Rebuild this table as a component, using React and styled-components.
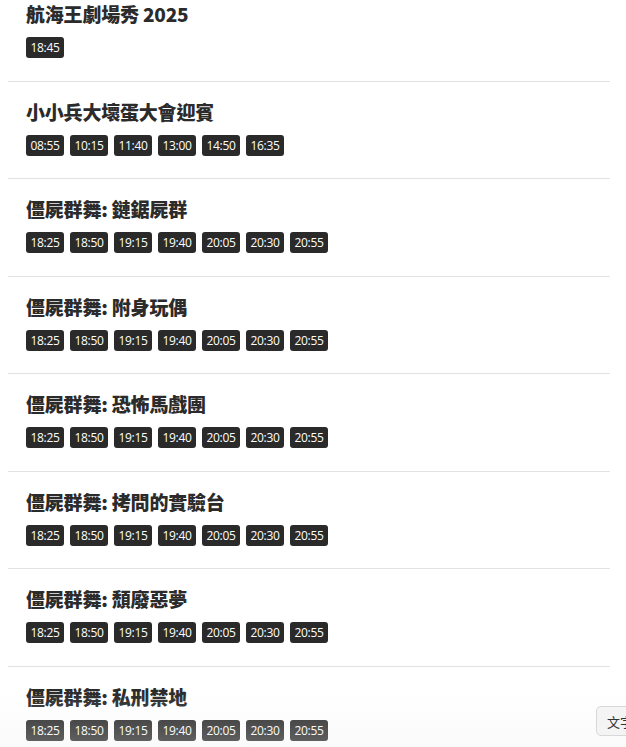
import React from 'react'
import styled, { createGlobalStyle } from 'styled-components'

const GlobalStyle = createGlobalStyle`
  html, body {
    margin: 0;
    padding: 0;
    background: #ffffff;
    overflow: hidden;
  }
  body {
    font-family: 'Noto Sans', 'Noto Sans CJK TC', sans-serif;
    color: #2b2b2b;
  }
`

const zombie = ['18:25', '18:50', '19:15', '19:40', '20:05', '20:30', '20:55']

const shows = [
  { title: '航海王劇場秀 2025', times: ['18:45'] },
  {
    title: '小小兵大壞蛋大會迎賓',
    times: ['08:55', '10:15', '11:40', '13:00', '14:50', '16:35'],
  },
  { title: '僵屍群舞: 鏈鋸屍群', times: zombie },
  { title: '僵屍群舞: 附身玩偶', times: zombie },
  { title: '僵屍群舞: 恐怖馬戲團', times: zombie },
  { title: '僵屍群舞: 拷問的實驗台', times: zombie },
  { title: '僵屍群舞: 頹廢惡夢', times: zombie },
  { title: '僵屍群舞: 私刑禁地', times: zombie },
]

function App() {
  return (
    <Page>
      <GlobalStyle />
      <List>
        {shows.map((show, index) => (
          <Item key={index}>
            <Title>{show.title}</Title>
            <Times>
              {show.times.map((t, i) => (
                <Chip key={i}>{t}</Chip>
              ))}
            </Times>
          </Item>
        ))}
      </List>
      <BottomFade />
      <LangButton>文字</LangButton>
    </Page>
  )
}

const Page = styled.div`
  width: 626px;
  height: 747px;
  overflow: hidden;
  position: relative;
`

const List = styled.div`
  margin: 0 16px 0 8px;
`

const Item = styled.div`
  padding: 18px 18px 22.5px;
  border-bottom: 1px solid #e2e2e2;

  &:first-child {
    padding-top: 2px;
  }
`

const Title = styled.div`
  font-family: 'Noto Sans CJK TC', 'Noto Sans', sans-serif;
  font-weight: 900;
  font-size: 19px;
  line-height: 24px;
  color: #2b2b2b;
  letter-spacing: -0.2px;
`

const Times = styled.div`
  display: flex;
  gap: 6px;
  margin-top: 11px;
`

const Chip = styled.span`
  display: inline-flex;
  align-items: center;
  justify-content: center;
  width: 38px;
  height: 21px;
  box-sizing: border-box;
  background: #2a2a2a;
  color: #ffffff;
  border-radius: 3px;
  font-family: 'Open Sans', 'Noto Sans', sans-serif;
  font-size: 12px;
  letter-spacing: -0.3px;
`

const BottomFade = styled.div`
  position: absolute;
  left: 0;
  right: 0;
  bottom: 0;
  height: 55px;
  pointer-events: none;
  background: linear-gradient(
    to bottom,
    rgba(238, 238, 238, 0) 0%,
    rgba(238, 238, 238, 0.3) 100%
  );
`

const LangButton = styled.div`
  position: absolute;
  left: 596px;
  top: 706px;
  height: 28px;
  padding: 0 10px;
  display: flex;
  align-items: center;
  background: #f4f4f4;
  border: 1px solid #d8d8d8;
  border-radius: 5px;
  font-family: 'Noto Sans CJK TC', sans-serif;
  font-size: 13px;
  color: #333;
  white-space: nowrap;
`

export default App
